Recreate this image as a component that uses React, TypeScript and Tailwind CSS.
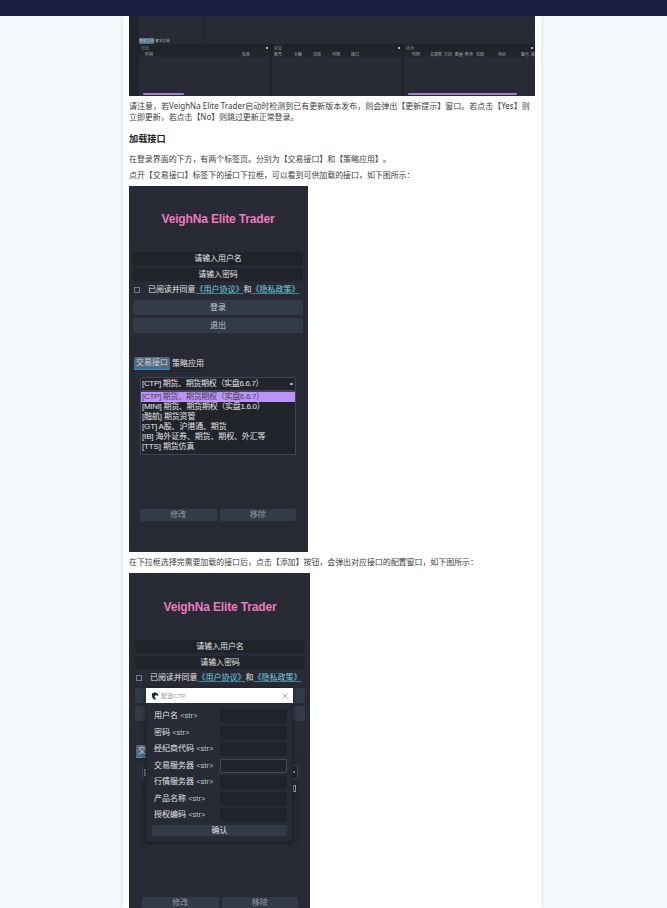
import React from 'react';

const ui = 'font-["Liberation_Sans","Noto_Sans_CJK_SC",sans-serif]';

function Line({ children, className = '' }: { children: React.ReactNode; className?: string }) {
  return <p className={`whitespace-nowrap text-[8px] leading-[11px] text-[#404040] [text-spacing-trim:space-all] ${className}`}>{children}</p>;
}

function LoginButton({ children }: { children: React.ReactNode }) {
  return (
    <div className="flex h-[15px] items-center justify-center rounded-[2px] bg-[#333a48] text-[#c9cdd2]">{children}</div>
  );
}

const options = [
  '[CTP] 期货、期货期权（实盘6.6.7）',
  '[MINI] 期货、期货期权（实盘1.6.0）',
  '[融航] 期货资管',
  '[GT] A股、沪港通、期货',
  '[IB] 海外证券、期货、期权、外汇等',
  '[TTS] 期货仿真',
];

function Login({ open }: { open: boolean }) {
  return (
    <div className={`flex w-[170px] flex-col whitespace-nowrap text-[8px] leading-[10px] text-[#e4e5e7] ${ui}`}>
      <h3 className="mt-[26px] h-[14px] text-center text-[12px] leading-[14px] font-bold tracking-[-0.15px] text-[#ee79bf]">
        VeighNa Elite Trader
      </h3>
      <div className="mt-[26px] flex h-[13px] items-center justify-center rounded-[2px] bg-[#20232a] tracking-[-0.1px]">请输入用户名</div>
      <div className="mt-[3px] flex h-[13px] items-center justify-center rounded-[2px] bg-[#20232a] tracking-[-0.1px]">请输入密码</div>
      <div className="mt-[3px] flex h-[12px] items-center">
        <span className="ml-px size-[6px] border border-[#777b84]" />
        <span className="ml-[8px] tracking-[-0.1px]">已阅读并同意</span>
        <span className="text-[#79cfe0] underline decoration-[#3f8290] underline-offset-1">《用户协议》</span>
        <span>和</span>
        <span className="text-[#79cfe0] underline decoration-[#3f8290] underline-offset-1">《隐私政策》</span>
      </div>
      <div className="mt-[4px]"><LoginButton>登录</LoginButton></div>
      <div className="mt-[3px]"><LoginButton>退出</LoginButton></div>
      <div className="mt-[24px] flex h-[13px] items-center">
        <span className="ml-px flex h-[13px] w-[36px] items-center justify-center rounded-t-[2px] border-b border-[#2996d8] bg-[#52687c] text-[#d0d5da]">交易接口</span>
        <span className="ml-[2px] bg-[#22252c]">策略应用</span>
      </div>
      <div className="flex h-[156px] flex-col border border-[#242730] px-[6px] pt-[6px]">
        <div className="flex h-[130px] flex-col border border-[#242730]">
          <div className="-mx-px -mt-px flex h-[14px] items-center justify-between rounded-[2px] border border-[#414650] bg-[#21242b] pr-[2px] pl-px">
            <span className="tracking-[-0.33px]">{options[0]}</span>
            <span className="h-[2px] w-[3px] bg-[#a5a8ad]" />
          </div>
          {open ? (
            <div className="-mx-px h-[64px] border border-[#414752] bg-[#21242b]">
              {options.map((o, i) => (
                <div key={o} className={i === 0 ? 'h-[10px] bg-[#bd93f9] pl-px tracking-[-0.3px] text-[#444052]' : i === 1 ? 'h-[10px] pl-px tracking-[-0.3px]' : 'h-[10px] pl-px tracking-[-0.15px]'}>{o}</div>
              ))}
            </div>
          ) : (
            <div className="mt-[3px] flex h-[12px] items-center justify-end bg-[#22252c] pr-px">
              <span className="h-[7px] w-[3px] border border-[#a5a8ad]" />
            </div>
          )}
        </div>
        <div className="mt-[2px] flex gap-[3px] text-[#949ba5]">
          <div className="flex h-[12px] flex-1 items-center justify-center rounded-[2px] bg-[#333a48]">修改</div>
          <div className="flex h-[12px] flex-1 items-center justify-center rounded-[2px] bg-[#333a48]">移除</div>
        </div>
      </div>
    </div>
  );
}

const fields = ['用户名', '密码', '经纪商代码', '交易服务器', '行情服务器', '产品名称', '授权编码'];

function Dialog() {
  return (
    <div className={`absolute top-[115px] left-[17px] h-[154px] w-[147px] border border-[#20232a] bg-[#282a35] text-[8px] leading-[10px] whitespace-nowrap text-[#e4e5e7] shadow-[0_1px_4px_#191b22] ${ui}`}>
      <div className="-mx-px -mt-px flex h-[15px] items-center bg-white px-[5px]">
        <svg viewBox="0 0 8 8" className="size-[8px]">
          <path d="M1 4Q0 1 3 .7L4 0l.8 1Q7.5 1.2 7.3 4L5.8 3.3 4 3.5 3.5 5l1.8 2.2L3 7.5Q1.2 6.5 1 4Z" fill="#222" />
        </svg>
        <span className="ml-[2px] text-[6.2px] text-[#999]">配置CTP</span>
        <svg viewBox="0 0 6 6" className="ml-auto size-[6px]">
          <path d="M.5.5l5 5M5.5.5l-5 5" stroke="#999" strokeWidth=".7" />
        </svg>
      </div>
      <div className="flex flex-col gap-[2.5px] pt-[6px] pr-[5px] pl-[7px]">
        {fields.map((f, i) => (
          <div key={f} className="flex h-[14px] items-center justify-between">
            <span>{f} <span className="text-[7.5px] text-[#b5cbd0]">&lt;str&gt;</span></span>
            <span className={i === 3 ? 'h-[14px] w-[67px] rounded-[2px] border border-[#454b56] bg-[#21242b]' : 'h-[14px] w-[67px] rounded-[2px] bg-[#20232a]'} />
          </div>
        ))}
      </div>
      <div className="mt-[3px] mr-[5px] ml-[5px] flex h-[11px] items-center justify-center rounded-[2px] bg-[#333a48]">确认</div>
    </div>
  );
}

function Dock({ title, cols, lead, bar, className }: { title: string; cols: [string, string][]; lead: string; bar?: string; className: string }) {
  return (
    <div className={`flex flex-col ${className}`}>
      <div className="flex h-[6px] items-center justify-between bg-[#20232a] px-[2px] text-[#92969c]">
        <span>{title}</span>
        <span className="size-[2px] bg-[#b0b0b0]" />
      </div>
      <div className={`flex h-[6px] items-center bg-[#22252c] ${lead}`}>
        {cols.map(([c, w], i) => <span key={i} className={`shrink-0 ${w}`}>{c}</span>)}
      </div>
      <div className="flex flex-1 items-end bg-[#282a35] pb-px">
        {bar && <span className={`h-[2px] rounded-full bg-[#a47ede] ${bar}`} />}
      </div>
    </div>
  );
}

function Workspace() {
  return (
    <div className={`flex h-[80px] w-[406px] shrink-0 overflow-hidden bg-[#20232a] pl-[10px] text-[4px] leading-[5px] whitespace-nowrap text-[#b7babe] ${ui}`}>
      <div className="flex flex-1 flex-col">
        <div className="flex h-[28px] bg-[#282a35]">
          <div className="flex w-[65px] items-end border-r border-[#20232a]">
            <span className="h-[6px] w-[15px] bg-[#52758d] text-center text-[3.7px] leading-[6px]">快速交易</span>
            <span className="ml-[1px] h-[6px] text-[3.7px] leading-[6px]">算法交易</span>
          </div>
        </div>
        <div className="mt-[1px] flex flex-1 gap-[2px]">
          <Dock className="w-[131px]" title="日志" lead="pl-[6px]" cols={[['时间', 'w-[97px]'], ['信息', '']]} bar="ml-[4px] w-[41px]" />
          <Dock className="w-[130px]" title="资金" lead="pl-[2px]" cols={[['账号', 'w-[20px]'], ['余额', 'w-[19px]'], ['冻结', 'w-[19px]'], ['可用', 'w-[19px]'], ['接口', '']]} />
          <Dock className="w-[131px]" title="持仓" lead="pl-[8px]" cols={[['代码', 'w-[18px]'], ['交易所', 'w-[14px]'], ['方向', 'w-[11px]'], ['数量', 'w-[10px]'], ['昨仓', 'w-[11px]'], ['冻结', 'w-[22px]'], ['均价', 'w-[23px]'], ['盈亏', 'w-[10px]'], ['接', '']]} bar="ml-[4px] w-[109px]" />
        </div>
      </div>
    </div>
  );
}

export default function App() {
  return (
    <div className='flex h-[908px] w-[667px] flex-col overflow-hidden bg-[#f4f8fb] font-["Noto_Sans","Noto_Sans_CJK_SC",sans-serif]'>
      <header className="relative z-10 h-[16px] shrink-0 bg-[#1a1f41]" />
      <main className="ml-[123px] flex w-[418px] flex-1 flex-col bg-white px-[6px] shadow-[0_0_4px_#dce2e6]">
        <Workspace />
        <Line className="mt-[4px]">请注意，若VeighNa Elite Trader启动时检测到已有更新版本发布，则会弹出【更新提示】窗口。若点击【Yes】则</Line>
        <Line className="tracking-[-0.07px]">立即更新，若点击【No】则跳过更新正常登录。</Line>
        <h2 className="mt-[10px] h-[14px] text-[9.2px] leading-[14px] font-bold text-[#222]">加载接口</h2>
        <Line className="mt-[7px] tracking-[-0.07px]">在登录界面的下方，有两个标签页。分别为【交易接口】和【策略应用】。</Line>
        <Line className="mt-[5px] tracking-[-0.07px]">点开【交易接口】标签下的接口下拉框，可以看到可供加载的接口，如下图所示：</Line>
        <section className="mt-[6px] h-[366px] w-[179px] shrink-0 bg-[#282a35] pl-[4px]">
          <Login open />
        </section>
        <Line className="mt-[4px] tracking-[-0.07px]">在下拉框选择完需要加载的接口后，点击【添加】按钮，会弹出对应接口的配置窗口，如下图所示：</Line>
        <section className="relative mt-[6px] h-[335px] w-[181px] shrink-0 overflow-hidden bg-[#282a35] pt-px pl-[6px]">
          <Login open={false} />
          <Dialog />
        </section>
      </main>
    </div>
  );
}
